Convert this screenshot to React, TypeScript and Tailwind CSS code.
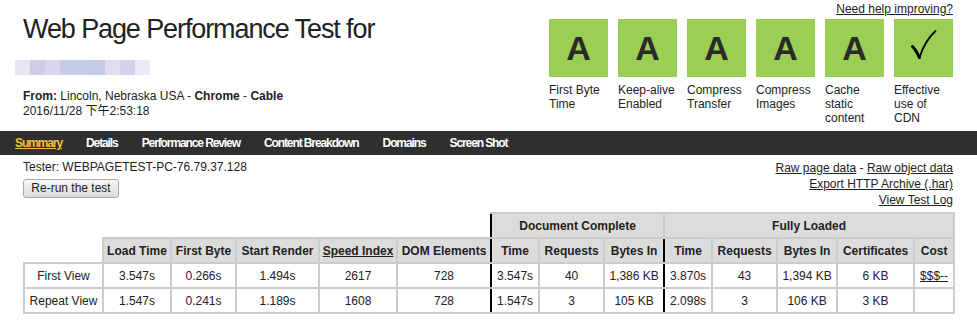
import React from "react";

const FONT = { fontFamily: '"Liberation Sans", Arial, "Noto Sans CJK SC", sans-serif' };

const grades = [
  { g: "A", label: "First Byte Time" },
  { g: "A", label: "Keep-alive Enabled" },
  { g: "A", label: "Compress Transfer" },
  { g: "A", label: "Compress Images" },
  { g: "A", label: "Cache static content" },
  { g: "check", label: "Effective use of CDN" },
];

const blurBlocks = ["#e7e7f4", "#cdcde7", "#d8d8ed", "#c8cbe7", "#c8cbe7", "#c5c8e6", "#dedeef", "#d2d3ea", "#ebebf6"];

const navItems = ["Summary", "Details", "Performance Review", "Content Breakdown", "Domains", "Screen Shot"];

function Check() {
  return (
    <svg width="59" height="58" viewBox="0 0 59 58" className="block">
      <path d="M18.5 27.5 C20.5 29.5 23 33.5 25.5 38.5" stroke="#000" strokeWidth="3" fill="none" strokeLinecap="round" />
      <path d="M25.5 38.5 C28.5 29 34 19 41.5 12" stroke="#000" strokeWidth="1.8" fill="none" strokeLinecap="round" />
    </svg>
  );
}

const gray = "border-2 border-[#cccccc]";

export default function App() {
  const rows = [
    ["First View", "3.547s", "0.266s", "1.494s", "2617", "728", "3.547s", "40", "1,386 KB", "3.870s", "43", "1,394 KB", "6 KB", "$$$--"],
    ["Repeat View", "1.547s", "0.241s", "1.189s", "1608", "728", "1.547s", "3", "105 KB", "2.098s", "3", "106 KB", "3 KB", ""],
  ];
  const widths = [79, 68, 65, 83, 78, 94, 48, 65, 60, 48, 65, 60, 77, 40];
  const heads = ["Time", "Requests", "Bytes In", "Time", "Requests", "Bytes In", "Certificates", "Cost"];

  const cellBorder = (i: number) => {
    if (i === 5 || i === 8) return `${gray} border-r-black`;
    if (i === 6 || i === 9) return `${gray} border-l-black`;
    return gray;
  };

  return (
    <div className="w-[977px] h-[322px] bg-white text-[#222] overflow-hidden" style={FONT}>
      {/* header */}
      <div className="flex justify-between h-[131px]">
        <div className="pl-[23px] pt-[13px]">
          <h1 className="text-[27px] leading-[32px] tracking-[-1.1px] text-[#222]">Web Page Performance Test for</h1>
          <div className="flex mt-[15px] ml-[-8px] h-[15px]">
            {blurBlocks.map((c, i) => (
              <div key={i} className="w-[15px] h-[15px]" style={{ backgroundColor: c }} />
            ))}
          </div>
          <div className="mt-[14px] text-[12px] leading-[15px]">
            <div>
              <b>From:</b> Lincoln, Nebraska USA - <b>Chrome</b> - <b>Cable</b>
            </div>
            <div>2016/11/28 下午2:53:18</div>
          </div>
        </div>
        <div className="pr-[24px] pt-[2px] flex flex-col items-end">
          <a className="text-[12px] leading-[15px] underline text-[#222] h-[15px]">Need help improving?</a>
          <div className="flex gap-[10px] mt-[2px]">
            {grades.map((g, i) => (
              <div key={i} className="w-[59px]">
                <div className="w-[59px] h-[58px] bg-[#9bcf53] flex items-center justify-center">
                  {g.g === "check" ? (
                    <Check />
                  ) : (
                    <span className="text-[34px] font-bold leading-none text-[#2a2a2a]">A</span>
                  )}
                </div>
                <div className="mt-[6px] text-[12px] leading-[14px] text-[#222]">{g.label}</div>
              </div>
            ))}
          </div>
        </div>
      </div>

      {/* nav */}
      <div className="h-[24px] bg-[#2f2f2f] flex items-center pl-[15px] gap-[24px]">
        {navItems.map((n, i) => (
          <span
            key={n}
            className={`text-[12px] font-bold leading-[24px] tracking-[-1.1px] ${i === 0 ? "text-[#f2c23a] underline" : "text-white"}`}
          >
            {n}
          </span>
        ))}
      </div>

      {/* content */}
      <div className="px-[23px] pr-[24px]">
        <div className="flex justify-between">
          <div className="pt-[5px]">
            <div className="text-[12px] leading-[15px]">Tester: WEBPAGETEST-PC-76.79.37.128</div>
            <button className="mt-[2px] h-[19px] w-[96px] text-[12px] leading-[17px] text-[#222] border border-[#a9a9a9] rounded-[3px] bg-gradient-to-b from-[#f7f7f7] to-[#dcdcdc]">
              Re-run the test
            </button>
          </div>
          <div className="pt-[5px] text-[12px] leading-[16px] text-right h-[53px]">
            <div>
              <a className="underline">Raw page data</a> - <a className="underline">Raw object data</a>
            </div>
            <div>
              <a className="underline">Export HTTP Archive (.har)</a>
            </div>
            <div>
              <a className="underline">View Test Log</a>
            </div>
          </div>
        </div>

        <table className="mt-[4px] border-collapse table-fixed w-[930px] text-[12px]">
          <colgroup>
            {widths.map((w, i) => (
              <col key={i} style={{ width: w }} />
            ))}
          </colgroup>
          <thead>
            <tr className="h-[25px]">
              <th colSpan={6} className="border-0" />
              <th colSpan={3} className={`${gray} border-l-black bg-[#dcdcdc] font-bold`}>
                Document Complete
              </th>
              <th colSpan={5} className={`${gray} border-l-black bg-[#dcdcdc] font-bold`}>
                Fully Loaded
              </th>
            </tr>
            <tr className="h-[25px]">
              <th className="border-0" />
              {["Load Time", "First Byte", "Start Render", "Speed Index", "DOM Elements"].map((h, i) => (
                <th key={h} className={`${cellBorder(i + 1)} bg-[#dcdcdc] font-bold whitespace-nowrap`}>
                  {h === "Speed Index" ? <span className="underline">{h}</span> : h}
                </th>
              ))}
              {heads.map((h, i) => (
                <th key={i} className={`${cellBorder(i + 6)} bg-[#dcdcdc] font-bold whitespace-nowrap`}>
                  {h}
                </th>
              ))}
            </tr>
          </thead>
          <tbody>
            {rows.map((r, ri) => (
              <tr key={ri} className="h-[25px]">
                {r.map((c, ci) => (
                  <td key={ci} className={`${cellBorder(ci)} text-center whitespace-nowrap px-0`}>
                    {ci === 13 && c ? <span className="underline">{c}</span> : c}
                  </td>
                ))}
              </tr>
            ))}
          </tbody>
        </table>
      </div>
    </div>
  );
}
